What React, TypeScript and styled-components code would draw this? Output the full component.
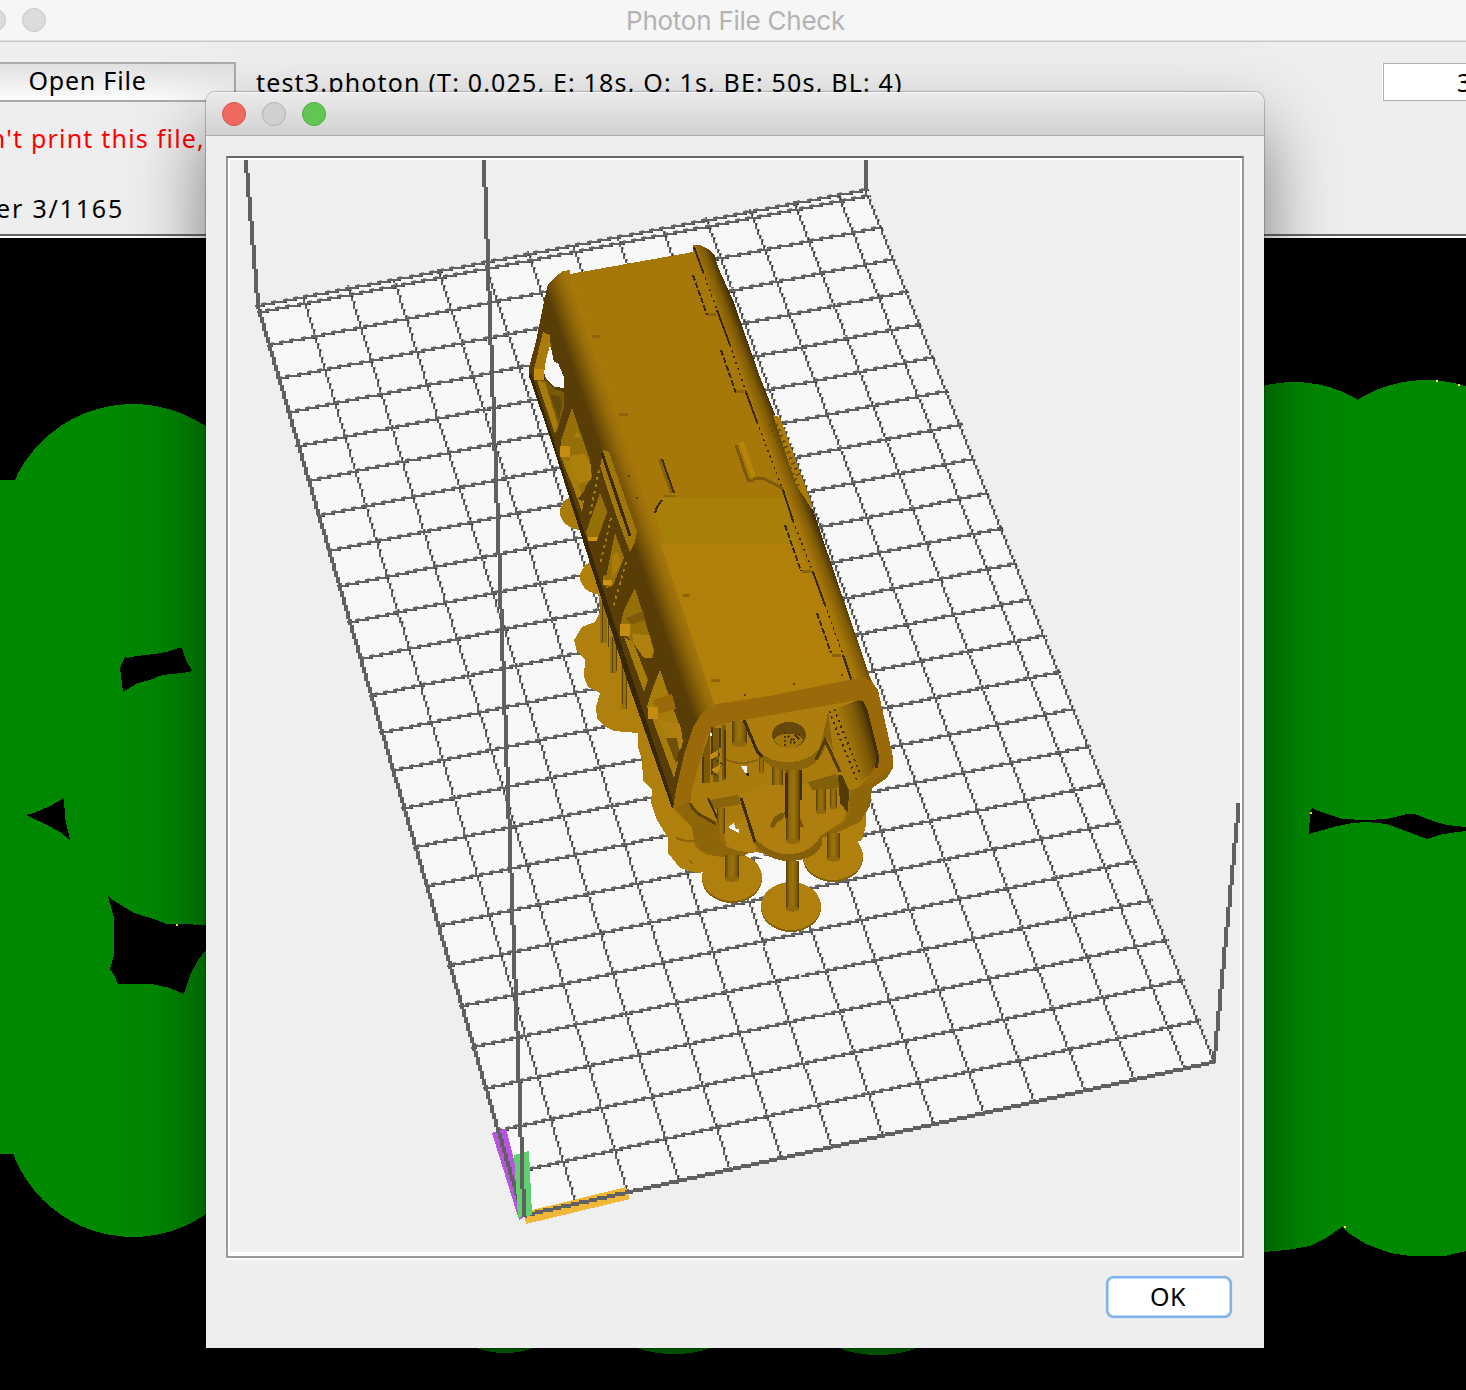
import React from "react";
import styled, { createGlobalStyle } from "styled-components";

const GlobalStyle = createGlobalStyle`
  html, body { margin: 0; padding: 0; background: #000; overflow: hidden; }
  * { box-sizing: border-box; }
`;

const uiFont = `"Noto Sans", "Open Sans", sans-serif`;

const Desktop = styled.div`
  position: relative;
  width: 1466px;
  height: 1390px;
  overflow: hidden;
  background: #000;
  font-family: ${uiFont};
  font-size: 25px;
  line-height: 36px;
  letter-spacing: 0.8px;
  color: #000;
`;

const MainWindow = styled.section`
  position: absolute;
  left: -60px;
  top: 0;
  width: 1591px;
  height: 1390px;
  display: flex;
  flex-direction: column;
`;

const MainTitleBar = styled.header`
  flex: none;
  display: grid;
  grid-template-columns: 200px 1fr 200px;
  align-items: center;
  height: 42px;
  padding: 0 2px 2px;
  background: #f6f6f6;
  border-bottom: 1px solid #c6c6c6;
  box-shadow: inset 0 -1px 0 #e0e0e0;
`;

const MainTitle = styled.h1`
  margin: 0;
  padding-top: 2px;
  font: 400 26px/38px Inter, Roboto, sans-serif;
  letter-spacing: -0.25px;
  color: #b2b2b2;
  text-align: center;
  white-space: nowrap;
`;

const Lights = styled.div`
  display: flex;
  gap: 16px;
`;

const Light = styled.span<{ $fill: string; $ring: string }>`
  width: 24px;
  height: 24px;
  border-radius: 50%;
  background: ${(p) => p.$fill};
  border: 1px solid ${(p) => p.$ring};
`;

const Toolbar = styled.div`
  flex: none;
  display: flex;
  flex-direction: column;
  height: 196px;
  padding-top: 20px;
  background: #eeeeee;
  border-bottom: 2px solid #fff;
  box-shadow: inset 0 -2px 0 #666;
  white-space: nowrap;
`;

const FileRow = styled.div`
  display: flex;
  align-items: flex-start;
  height: 40px;
`;

const OpenButton = styled.button`
  width: 296px;
  height: 40px;
  padding: 0 1px 4px 0;
  font: inherit;
  line-height: 32px;
  letter-spacing: inherit;
  color: #000;
  background: linear-gradient(#e0e0e0, #fcfcfc);
  border: 2px solid #ababab;
`;

const FileName = styled.span`
  flex: 1;
  padding: 2px 0 0 20px;
  letter-spacing: 1.17px;
`;

const LayerField = styled.div`
  width: 148px;
  height: 38px;
  margin-top: 1px;
  padding: 0 0 0 73px;
  background: #fff;
  border: 1px solid #b0b0b0;
  box-shadow: -1px 0 0 #fff;
`;

const Warning = styled.div`
  width: 265px;
  padding-top: 18px;
  letter-spacing: 1.2px;
  text-align: right;
  color: #f00;
`;

const LayerLabel = styled.div`
  width: 184px;
  padding-top: 34px;
  letter-spacing: 1.8px;
  text-align: right;
`;

const SliceView = styled.svg`
  display: block;
  flex: none;
  margin-left: 60px;
  width: 1466px;
  height: 1152px;
  background: #000;
`;

const Dialog = styled.section`
  position: absolute;
  left: 206px;
  top: 92px;
  width: 1058px;
  height: 1256px;
  display: flex;
  flex-direction: column;
  border-radius: 10px 10px 0 0;
  background: #eeeeee;
  box-shadow: 0 0 1px 1px rgba(0, 0, 0, 0.22), 0 37px 72px rgba(0, 0, 0, 0.5);
`;

const DialogTitleBar = styled.header`
  flex: none;
  display: flex;
  align-items: center;
  height: 44px;
  padding: 0 16px;
  border-radius: 10px 10px 0 0;
  background: linear-gradient(#ebebeb, #d2d2d2);
  border-bottom: 1px solid #ababab;
  box-shadow: inset 0 1px 0 #f6f6f6;
`;

const DialogBody = styled.div`
  flex: 1;
  display: flex;
  flex-direction: column;
  padding: 20px 20px 0;
`;

const ViewerFrame = styled.div`
  height: 1102px;
  border: 2px solid #999;
  border-top-color: #666;
  box-shadow: 0 2px 0 #fff;
`;

const Viewer = styled.svg`
  display: block;
  width: 1014px;
  height: 1098px;
  border: 2px solid #fff;
  border-bottom-width: 4px;
  background: #efefef;
`;

const DialogActions = styled.footer`
  display: flex;
  justify-content: flex-end;
  padding: 18px 12px 0 0;
`;

const OkButton = styled.button`
  width: 126px;
  height: 42px;
  padding: 0 2px 3px 0;
  font: inherit;
  letter-spacing: 0.4px;
  color: #000;
  background: #fff;
  border: 2px solid #80b2ec;
  border-radius: 8px;
  box-shadow: inset 0 0 0 1px #bcdafa, 0 0 1px #80b2ec;
`;

type Pt = [number, number];

const BL: Pt = [524, 1216];
const BR: Pt = [1214, 1062];
const TR: Pt = [865, 190];
const TL: Pt = [258, 306];

/* Perspective map from the unit square onto the build plate. */
const project = (() => {
  const [x0, y0] = BL, [x1, y1] = BR, [x2, y2] = TR, [x3, y3] = TL;
  const dx1 = x1 - x2, dx2 = x3 - x2, sx = x0 - x1 + x2 - x3;
  const dy1 = y1 - y2, dy2 = y3 - y2, sy = y0 - y1 + y2 - y3;
  const den = dx1 * dy2 - dx2 * dy1;
  const g = (sx * dy2 - dx2 * sy) / den;
  const h = (dx1 * sy - sx * dy1) / den;
  const a = x1 - x0 + g * x1, b = x3 - x0 + h * x3;
  const d = y1 - y0 + g * y1, e = y3 - y0 + h * y3;
  return (u: number, v: number): Pt => {
    const w = g * u + h * v + 1;
    return [(a * u + b * v + x0) / w, (d * u + e * v + y0) / w];
  };
})();

/* Rasterises a segment into square cells, one per step of the major axis. */
function cells(p: Pt, q: Pt, s = 2) {
  const steps = Math.max(1, Math.round(Math.max(Math.abs(q[0] - p[0]), Math.abs(q[1] - p[1])) / s));
  const out: Pt[] = [];
  for (let i = 0; i <= steps; i++) {
    const t = i / steps;
    out.push([
      Math.round((p[0] + (q[0] - p[0]) * t) / s) * s,
      Math.round((p[1] + (q[1] - p[1]) * t) / s) * s,
    ]);
  }
  return out;
}

const square = ([x, y]: Pt, w = 2, h = 2) => `M${x} ${y}h${w}v${h}h${-w}z`;

function SolidLine({ from, to, w = 4 }: { from: Pt; to: Pt; w?: number }) {
  const steep = Math.abs(to[1] - from[1]) > Math.abs(to[0] - from[0]);
  const d = cells(from, to)
    .map(([x, y]) => (steep ? square([x - 2, y - 1], w, 2) : square([x - 1, y - 2], 2, w)))
    .join("");
  return <path d={d} fill="#606060" />;
}

function GridLine({ from, to }: { from: Pt; to: Pt }) {
  const steep = Math.abs(to[1] - from[1]) > Math.abs(to[0] - from[0]);
  const line = cells(from, to);
  const minor = steep ? 0 : 1;
  let body = "", pale = "", dark = "";
  line.forEach((c, i) => {
    const prev = line[i - 1];
    const next = line[i + 1];
    const starts = !prev || prev[minor] !== c[minor];
    const ends = !next || next[minor] !== c[minor];
    const [x, y] = [c[0] - 1, c[1] - 1];
    if (steep) {
      body += square([x, starts ? y - 2 : y], 2, starts ? 4 : 2);
      if (ends) {
        body += square([x, y + 2], 2, 1);
        pale += square([x + 2, y], 1, 2);
        dark += square([x + 1, y + 1], 1, 2);
      }
    } else {
      body += square([starts ? x - 2 : x, y], starts ? 4 : 2, 2);
      if (starts) pale += square([x, y - 1], 3, 1);
      if (ends) {
        body += square([x + 2, y], 2, 2);
        dark += square([x + 2, y + 1], 2, 1);
      }
    }
  });
  return (
    <>
      <path d={body} fill="#626262" />
      <path d={pale} fill="#a0a0a0" />
      <path d={dark} fill="#383838" />
    </>
  );
}

const COLS = 13;
const ROWS = 24;

function Plate() {
  return (
    <g>
      <polygon points={[BL, BR, TR, TL].map((p) => p.join()).join(" ")} fill="#f8f8f8" />
      {Array.from({ length: COLS }, (_, i) => {
        const u = ((i + 1) * 5) / 68.04;
        return <GridLine key={`c${i}`} from={project(u, 0)} to={project(u, 1)} />;
      })}
      {Array.from({ length: ROWS }, (_, i) => {
        const v = ((i + 1) * 5) / 120.96;
        return <GridLine key={`r${i}`} from={project(0, v)} to={project(1, v)} />;
      })}
      <GridLine from={TL} to={TR} />
      <GridLine from={BR} to={TR} />
    </g>
  );
}

function Axes() {
  return (
    <g>
      <polygon points="492,1133 506,1128 528,1215 519,1220" fill="#b855e0" />
      <polygon points="524,1212 626,1187 630,1199 526,1224" fill="#f0b838" />
      <SolidLine from={TL} to={[522, 1212]} />
      <SolidLine from={[526, 1215]} to={BR} />
      <polygon points="514,1155 529,1151 532,1215 518,1218" fill="#60d070" />
      <SolidLine from={[246, 160]} to={TL} />
      <SolidLine from={[484, 160]} to={[524, 1216]} />
      <SolidLine from={[866, 160]} to={[865, 190]} />
      <SolidLine from={[1239, 803]} to={BR} />
    </g>
  );
}

function Post({ x, y, w, h }: { x: number; y: number; w: number; h: number }) {
  return (
    <g>
      <rect x={x} y={y} width={w} height={h} fill="url(#post)" />
      <ellipse cx={x + w / 2} cy={y + h} rx={w / 2} ry={w / 5} fill="#8f690a" />
    </g>
  );
}

function Foot({ x, y }: { x: number; y: number }) {
  return (
    <g>
      <ellipse cx={x} cy={y + 2} rx={30} ry={24} fill="#85600a" />
      <ellipse cx={x} cy={y} rx={30} ry={24} fill="#b0800f" />
    </g>
  );
}

function Supports() {
  return (
    <g>
      <ellipse cx="582" cy="512" rx="22" ry="18" fill="#a97b0a" />
      <ellipse cx="603" cy="577" rx="23" ry="18" fill="#b0800a" />
      <polygon
        points="598,590 600,612 595,622 582,627 574,640 577,652 585,660 584,677 588,687 600,693 596,707 597,718 604,726 614,731 638,733 638,747 642,760 643,780 652,790 651,803 657,820 668,838 668,853 680,868 697,873 720,870 740,800 640,600"
        fill="#b0800f"
      />
      <path d="M600 600v43h7v-43M610 637v36h7v-36M621 660v49h6v-49" fill="#94700a" />
      <path d="M602 600v42M608 612v35M612 637v36M616 637v34M622 660v44M626 665v44" stroke="#5c4206" fill="none" />
      <path d="M676 838q10 4 22 3M690 860l2 4" stroke="#8a640a" fill="none" strokeWidth="2" />
    </g>
  );
}

function SideWindows() {
  return (
    <g>
      <polygon points="545,297 548,286 556,290 600,420 690,690 694,727 675,808 630,680 568,483 529,376 529,368 537,337" fill="#583e06" />
      <polygon points="568,483 652,738 675,808 672,808 627,680 552,443 529,376 531,372" fill="#382704" />
      {/* rear window */}
      <polygon points="543,332 550,335 551,350 545,372 534,369" fill="#a97b0a" />
      <polygon points="550,345 552,352 554,362 558,363 564,377 564,388 555,387 547,380 544,373 546,360" fill="#f8f8f8" />
      <rect x="534" y="369" width="10" height="11" fill="#c48c10" />
      <polygon points="537,380 545,380 554,389 564,392 564,407 557,432 554,433" fill="#7a5a08" />
      <polygon points="537,381 545,382 558,425 555,433" fill="#a67c0a" />
      <polygon points="550,395 560,396 562,402 559,420" fill="#64490a" />
      {/* second window */}
      <polygon points="572,408 590,460 592,477 586,486 580,502 569,478 560,455 561,440" fill="#957009" />
      <polygon points="572,455 585,454 591,466 591,480 578,484 567,466" fill="#ad7f0b" />
      <rect x="560" y="446" width="10" height="11" fill="#c48c10" />
      <polygon points="563,459 570,462 584,500 582,512" fill="#a67c0a" />
      <polygon points="578,431 580,437 573,437" fill="#ad7f0b" />
      {/* door frames */}
      <path d="M598 467L590 515M606 495L590 520M600 477L580 500" stroke="#583e06" strokeWidth="5" />
      <polygon points="600,493 609,516 604,530 599,541 588,540 586,532" fill="#957009" />
      <polygon points="615,533 626,563 620,584 606,588 603,578" fill="#957009" />
      <path d="M612 556l6-4l3 12l-9 14z" fill="#ab7c0a" />
      <rect x="588" y="537" width="10" height="4" fill="#cc9210" />
      <rect x="603" y="580" width="9" height="5" fill="#cc9210" />
      <path d="M598 545L607 520L613 505M610 600L618 580L626 560M604 575L612 535" stroke="#583e06" strokeWidth="5" fill="none" />
      <path d="M599 470L590 515M611 518L600 565M626 562L613 608" stroke="#a67c0a" strokeWidth="2" strokeDasharray="3 4" />
      <polygon points="603,450 609,452 637,532 635,542 630,552 598,467 601,464" fill="#a67c0a" />
      <path d="M602 453L630 538" stroke="#3c2a04" strokeWidth="3" />
      <path d="M599 466L629 557" stroke="#583e06" strokeWidth="2" />
      {/* third window */}
      <polygon points="635,588 654,650 653,658 645,657 630,640 620,627 624,610" fill="#957009" />
      <polygon points="632,634 650,635 653,652 651,658 644,658 634,644" fill="#b0800f" />
      <polygon points="626,618 643,611 645,620 632,625" fill="#7d5b08" />
      <rect x="620" y="624" width="10" height="12" fill="#c48c10" />
      <polygon points="624,637 633,642 648,680 644,692" fill="#a67c0a" />
      {/* fourth window */}
      <polygon points="660,670 682,733 682,748 676,752 658,726 647,707 652,690" fill="#a67c0a" />
      <polygon points="653,700 672,694 676,709 658,714" fill="#99690a" />
      <polygon points="658,720 680,724 683,742 680,750 668,738" fill="#b0800f" />
      <rect x="648" y="707" width="10" height="12" fill="#c48c10" />
      <polygon points="652,718 660,724 678,762 674,778" fill="#a67c0a" />
      <polygon points="666,738 677,738 679,750 676,764" fill="#6e5108" />
    </g>
  );
}

function Roof() {
  return (
    <g>
      <polygon
        points="545,297 548,286 555,277 563,271 570,270 570,274 693,252 693,245 700,245 708,249 715,256 718,267 733,300 760,377 812,507 870,677 877,690 700,730 690,700"
        fill="#a67709"
      />
      <polygon points="662,543 797,543 866,690 700,730 650,600" fill="#b0800a" />
      <polygon points="660,498 785,498 797,543 665,543 655,513" fill="#a68008" />
      <polygon points="545,297 548,284 555,277 563,271 569,272 596,352 715,706 700,722 694,734 650,606" fill="url(#leftBevel)" />
      <polygon points="603,450 609,452 637,532 635,542 630,552 626,540 601,462" fill="#a0750a" />
      <path d="M602 453L630 536" stroke="#3c2a04" strokeWidth="3" />
      <path d="M612 458L637 530" stroke="#7d5b08" strokeWidth="2" strokeDasharray="2 3" />
      <polygon points="693,245 700,245 708,249 715,256 718,267 733,300 760,377 812,507 870,677 872,684 853,684 783,490 717,310" fill="url(#rightBevel)" />
      <polygon points="773,415 780,417 812,505 812,510 806,500 796,485" fill="#ab7c0a" />
      <path d="M770 424l28 62M776 424l24 55" stroke="#6b4e08" strokeWidth="4" strokeDasharray="2 4" />
      <g stroke="#3a2904" fill="none" strokeWidth="2">
        <path d="M694 247L703 272M717 310L730 345M746 392L757 422M783 490L793 521M813 572L825 605M843 655L852 682" />
        <path d="M703 272L717 310M730 345L746 392M757 422L783 490M793 521L813 572M825 605L843 655" strokeDasharray="2 4" strokeWidth="1.5" />
        <path d="M693 275L707 315M721 350L736 393M785 525L801 571M817 613L831 653" strokeDasharray="6 2" />
        <path d="M655 513L657 507L662 500" />
      </g>
      <path d="M708 314h8M736 391h8M802 571h9M832 655h9" stroke="#8a640a" strokeWidth="3" />
      <path d="M660 459L672 493" stroke="#86610a" strokeWidth="4" />
      <path d="M662 459L674 493" stroke="#3f2d04" strokeWidth="2" />
      <path d="M664 496h12" stroke="#8a640a" strokeWidth="2" />
      <path d="M741 442L754 478" stroke="#b5850d" strokeWidth="5" />
      <path d="M736 445L748 480" stroke="#7b5908" strokeWidth="3" />
      <path d="M747 480h7M753 478h9L773 483L783 489" stroke="#7d5b08" strokeWidth="3" fill="none" />
      <path d="M592 336h8M619 414h9M683 595h7M711 680h9" stroke="#8e660a" strokeWidth="3" />
      <path d="M628 476h2M636 498h2M793 684h2M841 675h2M744 695h2" stroke="#5c4206" strokeWidth="2" />
    </g>
  );
}

function Nose() {
  return (
    <g>
      <polygon
        points="673,808 676,790 684,755 693,727 702,713 716,704 763,697 863,677 872,682 878,690 893,757 893,768 887,778 872,788 870,806 860,822 843,830 822,838 822,846 812,855 790,861 768,855 757,852 727,857 707,855 695,847 692,828"
        fill="#99690a"
      />
      <polygon
        points="743,720 717,725 707,735 702,753 692,790 690,803 700,814 722,824 730,843 745,850 757,848 790,854 820,836 845,820 850,795 862,783 870,775 878,760 865,707 858,700"
        fill="#a97b0d"
      />
      {/* inner right wall */}
      <polygon points="830,708 858,700 865,707 878,760 870,775 858,784 850,770" fill="url(#innerWall)" />
      <path d="M829 711L857 780M834 709L861 776" stroke="#3a2904" strokeWidth="2" strokeDasharray="2 4" />
      <path d="M861 701L866 710L878 758L876 768" stroke="#432f05" strokeWidth="3" fill="none" />
      {/* left lattice */}
      <path d="M702 755L710 732V783H702ZM713 728h6v54h-6zM722 725h4v55h-4z" fill="#7a5a08" />
      <path d="M712 727v48M720 728v20M725 730v48M703 757v26" stroke="#4f3906" strokeWidth="2" />
      <path d="M712 748l8 6l-6 5l8 5l-8 8l3 6" stroke="#553d06" strokeWidth="2" fill="none" strokeDasharray="3 2" />
      <path d="M710 755l8-5v6l-8 4zM711 770l10-6l-3 10z" fill="#c08b12" />
      <rect x="710" y="733" width="2" height="3" fill="#f8f8f8" />
      <Post x={732} y={721} w={15} h={23} />
      <path d="M726 760q16 6 32 0" stroke="#8a640a" strokeWidth="2" fill="none" />
      <path d="M741 766h6v9l-3-4z" fill="#f8f8f8" />
      <path d="M746 774h2v2" stroke="#3a2904" strokeWidth="2" />
      <Post x={759} y={750} w={5} h={22} />
      <Post x={772} y={766} w={11} h={25} />
      {/* upper tongue */}
      <path d="M744 720L758 755Q772 771 790 771Q816 770 824 750L827 738L833 750L828 710Z" fill="#8a640a" />
      <path d="M744 720L754 744Q764 762 788 762Q814 761 821 744L828 712L858 700Z" fill="#ad7e0d" />
      <path d="M744 720L757 751L762 757" stroke="#3f2d04" strokeWidth="3" fill="none" />
      <path d="M816 760L825 740L840 772" stroke="#553d06" strokeWidth="3" fill="none" />
      <ellipse cx="789" cy="735" rx="17" ry="13" fill="#66490a" />
      <path d="M774 740q4-7 15-6q12 0 14 6q-4 8-14 8t-15-8" fill="#a1760c" />
      <path d="M785 732v14M788 736l8 8M790 743l10-9M795 735l6 6" stroke="#4b3605" strokeWidth="2" strokeDasharray="2 2" />
      {/* lower tongue */}
      <polygon points="722,824 745,818 757,852 740,853 727,848" fill="#b0800f" />
      <path d="M740 796L754 843Q770 862 790 861Q816 860 822 844V834L840 815L838 790L760 785Z" fill="#85600a" />
      <path d="M740 796L755 838Q770 855 790 854Q812 853 821 835L842 822L848 790L835 785H760Z" fill="#ae7f0e" />
      <path d="M741 798L755 842" stroke="#3f2d04" strokeWidth="3" />
      <path d="M770 827q2-13 16-15l-4 8q-6 1-8 8zM800 818l4 9h-5z" fill="#7a5708" />
      {/* equipment blocks */}
      <polygon points="808,782 836,774 842,788 812,790" fill="#82600a" />
      <polygon points="838,775 842,775 849,790 848,813 840,803" fill="#543c06" />
      <Post x={816} y={789} w={10} h={23} />
      <Post x={830} y={789} w={7} h={19} />
      <polygon points="710,800 738,795 741,804 714,809" fill="#8a640a" />
      <path d="M708 798L719 822" stroke="#3f2d04" strokeWidth="2" />
      <rect x="717" y="808" width="8" height="26" fill="url(#post)" />
      <path d="M728 827l6-4l2 6h3v4l-6-3z" fill="#f8f8f8" />
      {/* front lip */}
      <path d="M690 800L692 812L706 820L718 823L720 840Q728 851 748 852L745 856L720 857L700 850L694 840L692 826L676 808Z" fill="#8e660a" />
      <path d="M690 803Q694 813 706 818L716 824" stroke="#5c4206" strokeWidth="3" fill="none" />
      <path d="M850 790L872 783L893 765L887 778L872 788L870 806L860 822L838 832L822 838L825 833L842 825L850 812Z" fill="#8e660a" />
      <path d="M757 854l14 3v3l-12-2z" fill="#f8f8f8" />
      <Post x={786} y={770} w={14} h={71} />
      <rect x="785" y="773" width="3" height="45" fill="#3f2d04" />
      <rect x="800" y="770" width="2" height="30" fill="#3f2d04" />
    </g>
  );
}

function Model() {
  return (
    <g>
      <Foot x={833} y={856} />
      <path d="M820 838L866 810L866 825L862 840L856 842Z" fill="#b0800f" />
      <Supports />
      <Foot x={732} y={877} />
      <Foot x={791} y={906} />
      <SideWindows />
      <Roof />
      <Nose />
      <Post x={725} y={855} w={14} h={24} />
      <Post x={786} y={861} w={13} h={48} />
      <Post x={827} y={833} w={13} h={26} />
    </g>
  );
}

function PrintPreview() {
  return (
    <Viewer viewBox="230 160 1010 1092" preserveAspectRatio="none" shapeRendering="crispEdges">
      <defs>
        <linearGradient id="leftBevel" gradientUnits="userSpaceOnUse" x1="600" y1="447" x2="626" y2="438">
          <stop offset="0" stopColor="#583e06" />
          <stop offset="0.35" stopColor="#7c5807" />
          <stop offset="0.65" stopColor="#976c09" />
          <stop offset="1" stopColor="#a8790a" />
        </linearGradient>
        <linearGradient id="rightBevel" gradientUnits="userSpaceOnUse" x1="758" y1="420" x2="779" y2="412">
          <stop offset="0" stopColor="#a67709" />
          <stop offset="0.45" stopColor="#7f5b07" />
          <stop offset="1" stopColor="#261a02" />
        </linearGradient>
        <linearGradient id="innerWall" gradientUnits="userSpaceOnUse" x1="845" y1="740" x2="872" y2="732">
          <stop offset="0" stopColor="#a67a0b" />
          <stop offset="0.6" stopColor="#7f5b07" />
          <stop offset="1" stopColor="#4a3405" />
        </linearGradient>
        <linearGradient id="post">
          <stop offset="0" stopColor="#553d06" />
          <stop offset="0.25" stopColor="#8f690a" />
          <stop offset="0.55" stopColor="#9c730b" />
          <stop offset="0.85" stopColor="#7a5808" />
          <stop offset="1" stopColor="#4f3906" />
        </linearGradient>
      </defs>
      <Plate />
      <Model />
      <Axes />
    </Viewer>
  );
}

function LayerSlice() {
  return (
    <SliceView viewBox="0 238 1466 1152" shapeRendering="crispEdges">
      <g fill="#008800">
        <path d="M0 480H240V1154H0z" />
        <circle cx="133" cy="534" r="130" />
        <circle cx="133" cy="1109" r="128" />
        <path d="M1240 510H1466V1140H1240z" />
        <circle cx="1294" cy="507" r="125" />
        <circle cx="1426" cy="509" r="129" />
        <path d="M1240 1100V1252H1264L1287 1250L1310 1246L1326 1238L1342 1227L1350 1234L1366 1244L1390 1253L1410 1256L1445 1256L1466 1251V1100z" />
        <ellipse cx="505" cy="1330" rx="46" ry="23" />
        <ellipse cx="674" cy="1330" rx="56" ry="24" />
        <ellipse cx="878" cy="1330" rx="56" ry="25" />
      </g>
      <g fill="#000">
        <polygon points="120,668 123,661 126,656 127,658 136,656 155,654 166,652 179,648 182,648 185,658 192,671 182,673 162,675 150,680 138,683 123,692" />
        <polygon points="26,815 34,813 50,806 64,798 65,818 70,840 60,832 45,824 32,818" />
        <polygon points="108,896 113,900 134,913 157,920 166,924 220,925 220,938 206,950 198,960 190,975 184,994 170,988 152,984 118,984 114,975 110,969 114,955 114,918" />
        <polygon points="1312,808 1318,811 1343,819 1365,820 1387,819 1407,814 1415,814 1430,820 1447,825 1466,827 1466,831 1443,834 1427,839 1403,830 1387,824 1367,822 1353,823 1337,826 1309,834 1310,812" />
      </g>
      <path d="M176 924h2v2h-2zM1310 812h2v2h-2zM1344 1226h2v2h-2zM1436 380h2v2h-2zM1458 384h2v2h-2z" fill="#ff0" />
    </SliceView>
  );
}

export default function App() {
  return (
    <>
      <GlobalStyle />
      <Desktop>
        <MainWindow>
          <MainTitleBar>
            <Lights>
              <Light $fill="#dcdcdc" $ring="#c8c8c8" />
              <Light $fill="#dcdcdc" $ring="#c8c8c8" />
              <Light $fill="#dcdcdc" $ring="#c8c8c8" />
            </Lights>
            <MainTitle>Photon File Check</MainTitle>
          </MainTitleBar>
          <Toolbar>
            <FileRow>
              <OpenButton>Open File</OpenButton>
              <FileName>test3.photon (T: 0.025, E: 18s, O: 1s, BE: 50s, BL: 4)</FileName>
              <LayerField>3</LayerField>
            </FileRow>
            <Warning>Can't print this file,</Warning>
            <LayerLabel>Layer 3/1165</LayerLabel>
          </Toolbar>
          <LayerSlice />
        </MainWindow>
        <Dialog>
          <DialogTitleBar>
            <Lights>
              <Light $fill="#ee6a5f" $ring="#d6544a" />
              <Light $fill="#d0d0d0" $ring="#b2b2b2" />
              <Light $fill="#61c654" $ring="#4dac40" />
            </Lights>
          </DialogTitleBar>
          <DialogBody>
            <ViewerFrame>
              <PrintPreview />
            </ViewerFrame>
            <DialogActions>
              <OkButton>OK</OkButton>
            </DialogActions>
          </DialogBody>
        </Dialog>
      </Desktop>
    </>
  );
}
